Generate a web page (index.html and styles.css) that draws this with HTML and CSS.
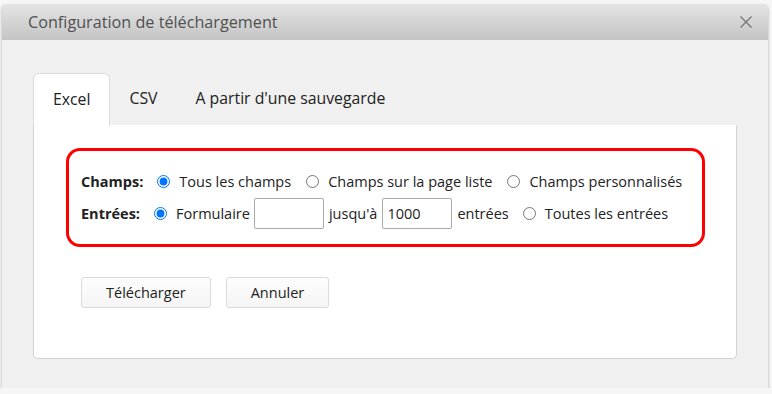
FILE: index.html
```html
<!DOCTYPE html>
<html lang="fr">
<head>
    <meta charset="UTF-8">
    <title>Configuration de téléchargement</title>
    <link rel="stylesheet" href="styles.css">
</head>
<body>
    <div class="dialog">
        <div class="dialog-header">
            <span class="dialog-title">Configuration de téléchargement</span>
            <button class="close-btn" aria-label="Fermer">
                <svg width="14" height="14" viewBox="0 0 14 14">
                    <path d="M1.5 1.5 L12.5 12.5 M12.5 1.5 L1.5 12.5" stroke="#777" stroke-width="1.4" fill="none"/>
                </svg>
            </button>
        </div>

        <div class="dialog-body">
            <div class="tabs">
                <a href="#" class="tab current">Excel</a>
                <a href="#" class="tab">CSV</a>
                <a href="#" class="tab">A partir d'une sauvegarde</a>
            </div>

            <div class="panel">
                <div class="options">
                    <div class="row">
                        <span class="label">Champs:</span>
                        <label class="choice"><input type="radio" name="champs" checked> Tous les champs</label>
                        <label class="choice"><input type="radio" name="champs"> Champs sur la page liste</label>
                        <label class="choice"><input type="radio" name="champs"> Champs personnalisés</label>
                    </div>
                    <div class="row">
                        <span class="label">Entrées:</span>
                        <label class="choice tight"><input type="radio" name="entrees" checked> Formulaire</label>
                        <input type="text" class="num">
                        <span class="word">jusqu'à</span>
                        <input type="text" class="num" value="1000">
                        <span class="word">entrées</span>
                        <label class="choice"><input type="radio" name="entrees"> Toutes les entrées</label>
                    </div>
                </div>

                <div class="actions">
                    <button class="btn">Télécharger</button>
                    <button class="btn">Annuler</button>
                </div>
            </div>
        </div>
    </div>
</body>
</html>
```

FILE: styles.css
```css
/* Reset basique */
* { margin: 0; padding: 0; box-sizing: border-box; }

body {
    font-family: 'Open Sans', 'Segoe UI', sans-serif;
    background: #f6f6f6;
    color: #222;
    padding: 4px 4px 0 2px;
}

/* Fenêtre */
.dialog {
    width: 766px;
    height: 384px;
    background: #f0f0f0;
    border-radius: 4px 4px 0 0;
    box-shadow: 0 2px 3px rgba(0, 0, 0, 0.35);
    display: flex;
    flex-direction: column;
}

.dialog-header {
    height: 36px;
    background: linear-gradient(#e4e4e4, #c4c4c4);
    border-radius: 4px 4px 0 0;
    display: flex;
    align-items: center;
    justify-content: space-between;
    padding: 0 15px 0 26px;
}

.dialog-title {
    font-size: 16.2px;
    color: #505050;
    margin-top: -1px;
}

.close-btn {
    background: none;
    border: none;
    width: 14px;
    height: 14px;
    display: flex;
    cursor: pointer;
}

.dialog-body {
    flex: 1;
    padding: 33px 31px 29px;
    display: flex;
    flex-direction: column;
}

/* Onglets */
.tabs {
    display: flex;
    height: 52px;
}

.tab {
    display: block;
    padding: 0 19px;
    line-height: 50px;
    font-size: 15.8px;
    color: #222;
    text-decoration: none;
    border-radius: 6px 6px 0 0;
}

.tab.current {
    background: #fff;
    border: 1px solid #dcdcdc;
    border-bottom: none;
    margin-bottom: -1px;
    position: relative;
}

/* Contenu */
.panel {
    flex: 1;
    background: #fff;
    border: 1px solid #d2d2d2;
    border-top-color: #fff;
    border-radius: 0 0 5px 5px;
    padding: 22px 31px 0 32px;
}

.options {
    border: 3px solid #f00;
    border-radius: 14px;
    height: 99px;
    padding: 0 12px;
    display: flex;
    flex-direction: column;
    justify-content: center;
    font-size: 14.5px;
}

.row {
    display: flex;
    align-items: center;
    height: 32px;
    white-space: nowrap;
}

.row > * {
    flex-shrink: 0;
}

.label {
    font-weight: bold;
    margin-right: 14px;
}

.choice {
    display: flex;
    align-items: center;
    margin-right: 15px;
}

.choice.tight {
    margin-right: 4px;
}

.choice input {
    width: 13px;
    height: 13px;
    margin: 0 9px 0 0;
    accent-color: #0075ff;
}

.num {
    width: 70px;
    height: 31px;
    border: 1px solid #a9a9a9;
    border-radius: 2px;
    padding: 0 4px;
    font-family: inherit;
    font-size: 14.5px;
    color: #222;
}

.word {
    margin: 0 5px;
}

.word + .choice {
    margin-left: 9px;
}

.actions {
    display: flex;
    gap: 15px;
    margin-top: 30px;
    padding-left: 15px;
}

.btn {
    height: 31px;
    padding: 0 24px;
    font-family: inherit;
    font-size: 14.5px;
    color: #222;
    background: linear-gradient(#fdfdfd, #f5f5f5);
    border: 1px solid #dadada;
    border-radius: 3px;
    cursor: pointer;
}
```
